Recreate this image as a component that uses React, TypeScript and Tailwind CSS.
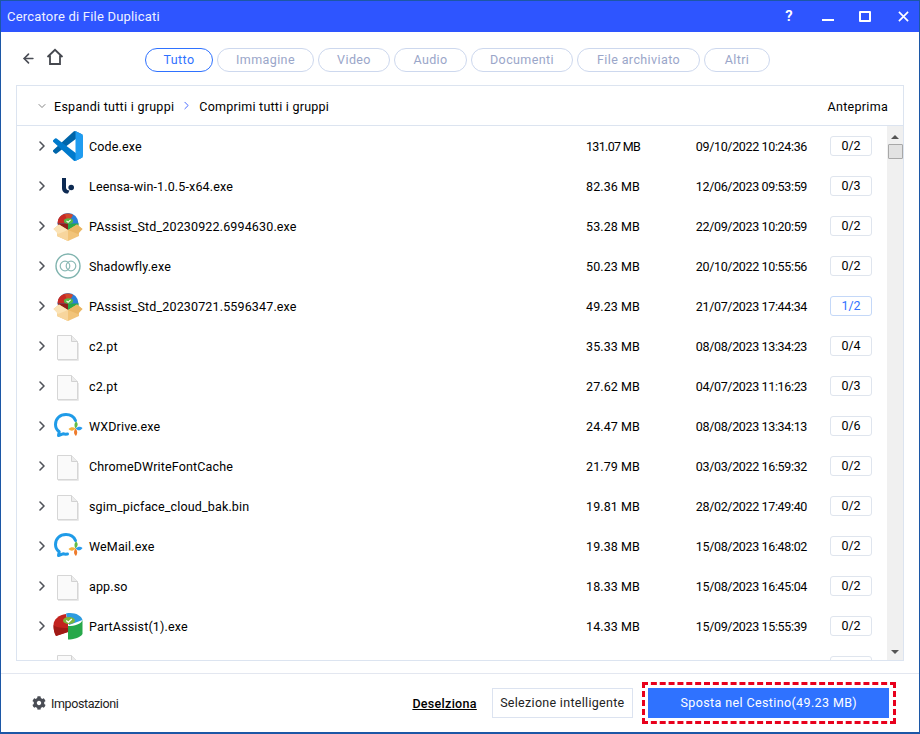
import React from "react";
import { ArrowLeft, ChevronDown, ChevronRight } from "lucide-react";
import { FaCog } from "react-icons/fa";

const tabs = [
  { label: "Tutto", w: "w-[68px]" },
  { label: "Immagine", w: "w-[97px]" },
  { label: "Video", w: "w-[72px]" },
  { label: "Audio", w: "w-[73px]" },
  { label: "Documenti", w: "w-[102px]" },
  { label: "File archiviato", w: "w-[123px]" },
  { label: "Altri", w: "w-[66px]" },
];

type IconKind = "code" | "leensa" | "box" | "shadow" | "file" | "chat" | "pie";

const rows: { name: string; size: string; date: string; count: string; icon: IconKind }[] = [
  { name: "Code.exe", size: "131.07 MB", date: "09/10/2022 10:24:36", count: "0/2", icon: "code" },
  { name: "Leensa-win-1.0.5-x64.exe", size: "82.36 MB", date: "12/06/2023 09:53:59", count: "0/3", icon: "leensa" },
  { name: "PAssist_Std_20230922.6994630.exe", size: "53.28 MB", date: "22/09/2023 10:20:59", count: "0/2", icon: "box" },
  { name: "Shadowfly.exe", size: "50.23 MB", date: "20/10/2022 10:55:56", count: "0/2", icon: "shadow" },
  { name: "PAssist_Std_20230721.5596347.exe", size: "49.23 MB", date: "21/07/2023 17:44:34", count: "1/2", icon: "box" },
  { name: "c2.pt", size: "35.33 MB", date: "08/08/2023 13:34:23", count: "0/4", icon: "file" },
  { name: "c2.pt", size: "27.62 MB", date: "04/07/2023 11:16:23", count: "0/3", icon: "file" },
  { name: "WXDrive.exe", size: "24.47 MB", date: "08/08/2023 13:34:13", count: "0/6", icon: "chat" },
  { name: "ChromeDWriteFontCache", size: "21.79 MB", date: "03/03/2022 16:59:32", count: "0/2", icon: "file" },
  { name: "sgim_picface_cloud_bak.bin", size: "19.81 MB", date: "28/02/2022 17:49:40", count: "0/2", icon: "file" },
  { name: "WeMail.exe", size: "19.38 MB", date: "15/08/2023 16:48:02", count: "0/2", icon: "chat" },
  { name: "app.so", size: "18.33 MB", date: "15/08/2023 16:45:04", count: "0/2", icon: "file" },
  { name: "PartAssist(1).exe", size: "14.33 MB", date: "15/09/2023 15:55:39", count: "0/2", icon: "pie" },
  { name: "", size: "", date: "", count: "", icon: "file" },
];

function FileIcon() {
  return (
    <svg viewBox="0 0 30 30" className="w-[30px] h-[30px]">
      <path d="M4.5 4.5H18.5L24.5 10.5V28.5H4.5Z" fill="#fafafa" stroke="#d6d6d6" />
      <path d="M18.5 4.5V10.5H24.5" fill="#ececec" stroke="#d2d2d2" />
      <path d="M5 29.5H25.5V12" fill="none" stroke="#e8e8e8" />
    </svg>
  );
}

function RowIcon({ kind }: { kind: IconKind }) {
  if (kind === "file") return <FileIcon />;
  if (kind === "code")
    return (
      <svg viewBox="0 0 100 100" className="w-[30px] h-[30px]">
        <path d="M96.46 10.8 75.86.88a6.23 6.23 0 0 0-7.1 1.2L1.3 63.6a4.16 4.16 0 0 0 0 6.16l5.5 5a4.16 4.16 0 0 0 5.32.24L93.34 13.4a4.13 4.13 0 0 1 6.66 3.3v-.24a6.25 6.25 0 0 0-3.54-5.66Z" fill="#0065a9" />
        <path d="M96.46 89.2 75.86 99.12a6.23 6.23 0 0 1-7.1-1.2L1.3 36.4a4.16 4.16 0 0 1 0-6.16l5.5-5a4.16 4.16 0 0 1 5.32-.24L93.34 86.6a4.13 4.13 0 0 0 6.66-3.3v.24a6.25 6.25 0 0 1-3.54 5.66Z" fill="#007acc" />
        <path d="M75.86 99.13a6.23 6.23 0 0 1-7.11-1.2c2.3 2.3 6.25.67 6.25-2.6V4.67c0-3.27-3.94-4.9-6.25-2.6a6.23 6.23 0 0 1 7.1-1.2l20.6 9.9A6.25 6.25 0 0 1 100 16.4v67.2a6.25 6.25 0 0 1-3.54 5.63Z" fill="#1f9cf0" />
      </svg>
    );
  if (kind === "leensa")
    return (
      <svg viewBox="0 0 30 30" className="w-[30px] h-[30px]">
        <path d="M9 7H13V16.5C13 18.5 14.5 19.5 16.5 19.5L15 22.5C11 22.5 9 20.5 9 17Z" fill="#0d2a52" />
        <circle cx="18.2" cy="16.5" r="2.8" fill="#0d2a52" />
      </svg>
    );
  if (kind === "shadow")
    return (
      <svg viewBox="0 0 30 30" className="w-[30px] h-[30px]">
        <circle cx="15" cy="15" r="12" fill="#fff" stroke="#7fb3ae" strokeWidth="1.4" />
        <circle cx="12" cy="15" r="4.8" fill="none" stroke="#8cbab6" strokeWidth="1.2" />
        <circle cx="18" cy="15" r="4.8" fill="none" stroke="#8cbab6" strokeWidth="1.2" />
      </svg>
    );
  if (kind === "chat")
    return (
      <svg viewBox="0 0 30 30" className="w-[30px] h-[30px]">
        <path
          d="M22.5 9.5C20.8 5.5 17 3.5 13 3.5C7 3.5 2.5 7.5 2.5 13.5C2.5 16.5 3.8 19 6.2 20.8L5.5 24.5L10 22.8C11.5 23.2 13 23.2 14.5 23"
          fill="none"
          stroke="#1f9be8"
          strokeWidth="3"
          strokeLinecap="round"
          strokeLinejoin="round"
        />
        <path d="M23 10.5C25.5 12.5 25 15 22.5 17.5C21 15 21 12.5 23 10.5Z" fill="#62bb46" />
        <path d="M15.5 18C18 15.5 20.5 16 22.5 17.5C20.5 20 18 20.5 15.5 18Z" fill="#f6b23c" />
        <path d="M29.5 17C27.5 20 25 20 22.5 17.5C25 15.5 27.5 15 29.5 17Z" fill="#2a9df0" />
        <path d="M22.5 17.5C25 20 24.5 22.5 23 25C20.5 23 20.5 20 22.5 17.5Z" fill="#ee7b2c" />
      </svg>
    );
  if (kind === "pie")
    return (
      <svg viewBox="0 0 30 30" className="w-[30px] h-[30px]">
        <path d="M0.5 14C0.5 8 6 4 13 3L15 13L15 21L3 25C1.2 22 0.5 18 0.5 14Z" fill="#c2231f" />
        <path d="M0.5 14C2 16 6 17 15 17V21L3 25C1.2 22 0.5 18 0.5 14Z" fill="#a01a16" />
        <path d="M13 2.5C21 1 28 4 29.5 9L16 14Z" fill="#2d9be0" />
        <path d="M29.5 9V23C27 27 20 28.5 15 28.5V15C22 15 28 13 29.5 9Z" fill="#27a84a" />
        <ellipse cx="16" cy="9.5" rx="6" ry="3.6" fill="#7cb53a" />
        <path d="M13.2 9.5L15.4 11.3L18.8 8" fill="none" stroke="#fff" strokeWidth="1.3" />
      </svg>
    );
  return (
    <svg viewBox="0 0 30 30" className="w-[30px] h-[30px]">
      <circle cx="15" cy="12.5" r="10.5" fill="#2b7fd8" />
      <path d="M15 12.5L5 9.5C6.5 5 10 2.5 15 2.5C17 2.5 18.5 3 20 4Z" fill="#d04a2c" />
      <path d="M15 12.5L4.5 12.5C4.5 7.5 8 4 12 3Z" fill="#c92a25" />
      <path d="M15 12.5L25.5 12.5V20H15Z" fill="#2aa84a" />
      <path d="M15 12.5H5V20H15Z" fill="#8f1f1a" />
      <ellipse cx="15.5" cy="10" rx="4.6" ry="2.8" fill="#57b947" />
      <path d="M13.5 9.9L15.1 11.3L17.6 8.9" fill="none" stroke="#fff" strokeWidth="1.1" />
      <path d="M0.5 18L6 13.5L15 19L24 13.5L29.5 18L26 20.5V25L15 30L4 25V20.5Z" fill="#f2c479" />
      <path d="M15 19V30L4 25V20.5Z" fill="#f7d59c" />
      <path d="M15 19L5 23L0.5 18L6 13.5Z" fill="#fbe3b6" />
      <path d="M15 19L25 23L29.5 18L24 13.5Z" fill="#eab765" />
    </svg>
  );
}

function Row({ name, size, date, count, icon }: (typeof rows)[number]) {
  const selected = count === "1/2";
  return (
    <div className="flex items-center h-10 shrink-0 pl-[18px]">
      <ChevronRight className="w-[16px] h-[16px] text-[#50535a] -ml-[1px]" strokeWidth={2.4} />
      <div className="w-[30px] ml-[3px] shrink-0">
        <RowIcon kind={icon} />
      </div>
      <span className="ml-[6px] w-[497px] pt-[2px] text-[12.5px] text-black tracking-[0.15px]">{name}</span>
      <span className={`w-[85px] pt-[2px] text-[12.5px] text-black ${size.startsWith("131") ? "tracking-[-0.68px]" : "tracking-[0.1px]"}`}>
        {size}
      </span>
      <span className="w-[136px] pt-[2px] text-right text-[12.5px] text-black tracking-[-0.35px]">{date}</span>
      <span
        className={`ml-[23px] w-[42px] h-5 flex items-center justify-center rounded-[3px] border text-[12.5px] ${
          selected ? "border-[#c4d8f8] text-[#2f72ff]" : "border-[#dfe5ee] text-black"
        }`}
      >
        {count}
      </span>
    </div>
  );
}

export default function App() {
  return (
    <div className="w-[920px] h-[734px] bg-white border border-[#1c57a6] border-b-2 flex flex-col overflow-hidden font-['Roboto',sans-serif]">
      {/* title bar */}
      <div className="h-[31px] shrink-0 bg-[#2e55ff] flex items-center text-white">
        <span className="ml-[6px] text-[13px] tracking-[0.2px] text-[#eef1ff]">Cercatore di File Duplicati</span>
        <div className="ml-auto mr-[10px] flex items-center h-full">
          <span className="w-[16px] text-center text-[15px] font-semibold">?</span>
          <span className="ml-[25px] w-[12px] h-[2px] bg-white mt-[6px]" />
          <span className="ml-[25px] w-[12px] h-[11px] border-2 border-white rounded-[1px]" />
          <svg viewBox="0 0 12 12" className="ml-[27px] w-[11px] h-[11px]">
            <path d="M1 1L11 11M11 1L1 11" stroke="#fff" strokeWidth="1.8" />
          </svg>
        </div>
      </div>

      {/* toolbar */}
      <div className="h-[53px] shrink-0 flex items-center pl-[20px] pb-[1px]">
        <ArrowLeft className="w-[15px] h-[15px] text-[#4a4d55]" strokeWidth={2.6} />
        <svg viewBox="0 0 18 18" className="w-[18px] h-[18px] ml-[10px] -mt-[2px]">
          <path d="M1.5 9L9 1.8L16.5 9M4 7.5V16H14V7.5" fill="none" stroke="#45484f" strokeWidth="1.8" />
        </svg>
        <div className="ml-[81px] flex gap-1 mt-[3px]">
          {tabs.map((t, i) => (
            <span
              key={t.label}
              className={`${t.w} h-6 pt-[1px] rounded-full border flex items-center justify-center text-[12.5px] tracking-[0.4px] ${
                i === 0 ? "border-[#2f72ff] text-[#2f72ff]" : "border-[#cdd8ee] text-[#9aa6c9]"
              }`}
            >
              {t.label}
            </span>
          ))}
        </div>
      </div>

      {/* file list panel */}
      <div className="mx-[15px] w-[888px] h-[576px] shrink-0 border border-[#dce4f0] flex flex-col">
        <div className="h-[40px] shrink-0 border-b border-[#dce4f0] flex items-center">
          <ChevronDown className="ml-[19px] w-[12px] h-[12px] text-[#666]" strokeWidth={1.6} />
          <span className="ml-[6px] pt-[3px] text-[12.5px] text-black tracking-[0.28px]">Espandi tutti i gruppi</span>
          <ChevronRight className="ml-[6px] w-[13px] h-[13px] text-[#2e55ff]" strokeWidth={1.6} />
          <span className="ml-[6px] pt-[3px] text-[12.5px] text-black tracking-[0.24px]">Comprimi tutti i gruppi</span>
          <span className="ml-auto mr-[15px] pt-[3px] text-[12.5px] text-black tracking-[0.3px]">Anteprima</span>
        </div>
        <div className="flex flex-1 min-h-0">
          <div className="flex-1 flex flex-col overflow-hidden">
            {rows.map((r, i) => (
              <Row key={i} {...r} />
            ))}
          </div>
          {/* scrollbar */}
          <div className="w-[16px] bg-[#f0f0f0] flex flex-col items-center shrink-0">
            <div className="mt-[9px] w-0 h-0 border-x-[4px] border-x-transparent border-b-[4px] border-b-[#555]" />
            <div className="mt-[5px] w-[15px] h-[15px] bg-[#e2e2e2] border border-[#a8a8a8] rounded-[1px]" />
            <div className="mt-auto mb-[6px] w-0 h-0 border-x-[4px] border-x-transparent border-t-[4px] border-t-[#555]" />
          </div>
        </div>
      </div>

      {/* footer */}
      <div className="mt-[12px] flex-1 border-t border-[#e3e7f0] flex items-center pl-[31px]">
        <FaCog className="w-[14px] h-[14px] text-[#4a4d55]" />
        <span className="ml-[5px] pt-[2px] text-[12.5px] text-[#222] tracking-[-0.4px]">Impostazioni</span>
        <span className="ml-[294px] pt-[2px] text-[12.5px] font-medium text-black underline tracking-[0.3px]">Deselziona</span>
        <span className="ml-[15px] w-[141px] h-[30px] pt-[1px] border border-[#dce3f0] flex items-center justify-center text-[12.5px] text-[#222] tracking-[0.3px]">
          Selezione intelligente
        </span>
        <div className="ml-[9px] w-[254px] h-[42px] border-[3px] border-dashed border-[#e8001c] flex items-center justify-center">
          <span className="w-[241px] h-[30px] pt-[1px] bg-[#2f72ff] flex items-center justify-center text-[12.5px] text-white tracking-[0.38px]">
            Sposta nel Cestino(49.23 MB)
          </span>
        </div>
      </div>
    </div>
  );
}
